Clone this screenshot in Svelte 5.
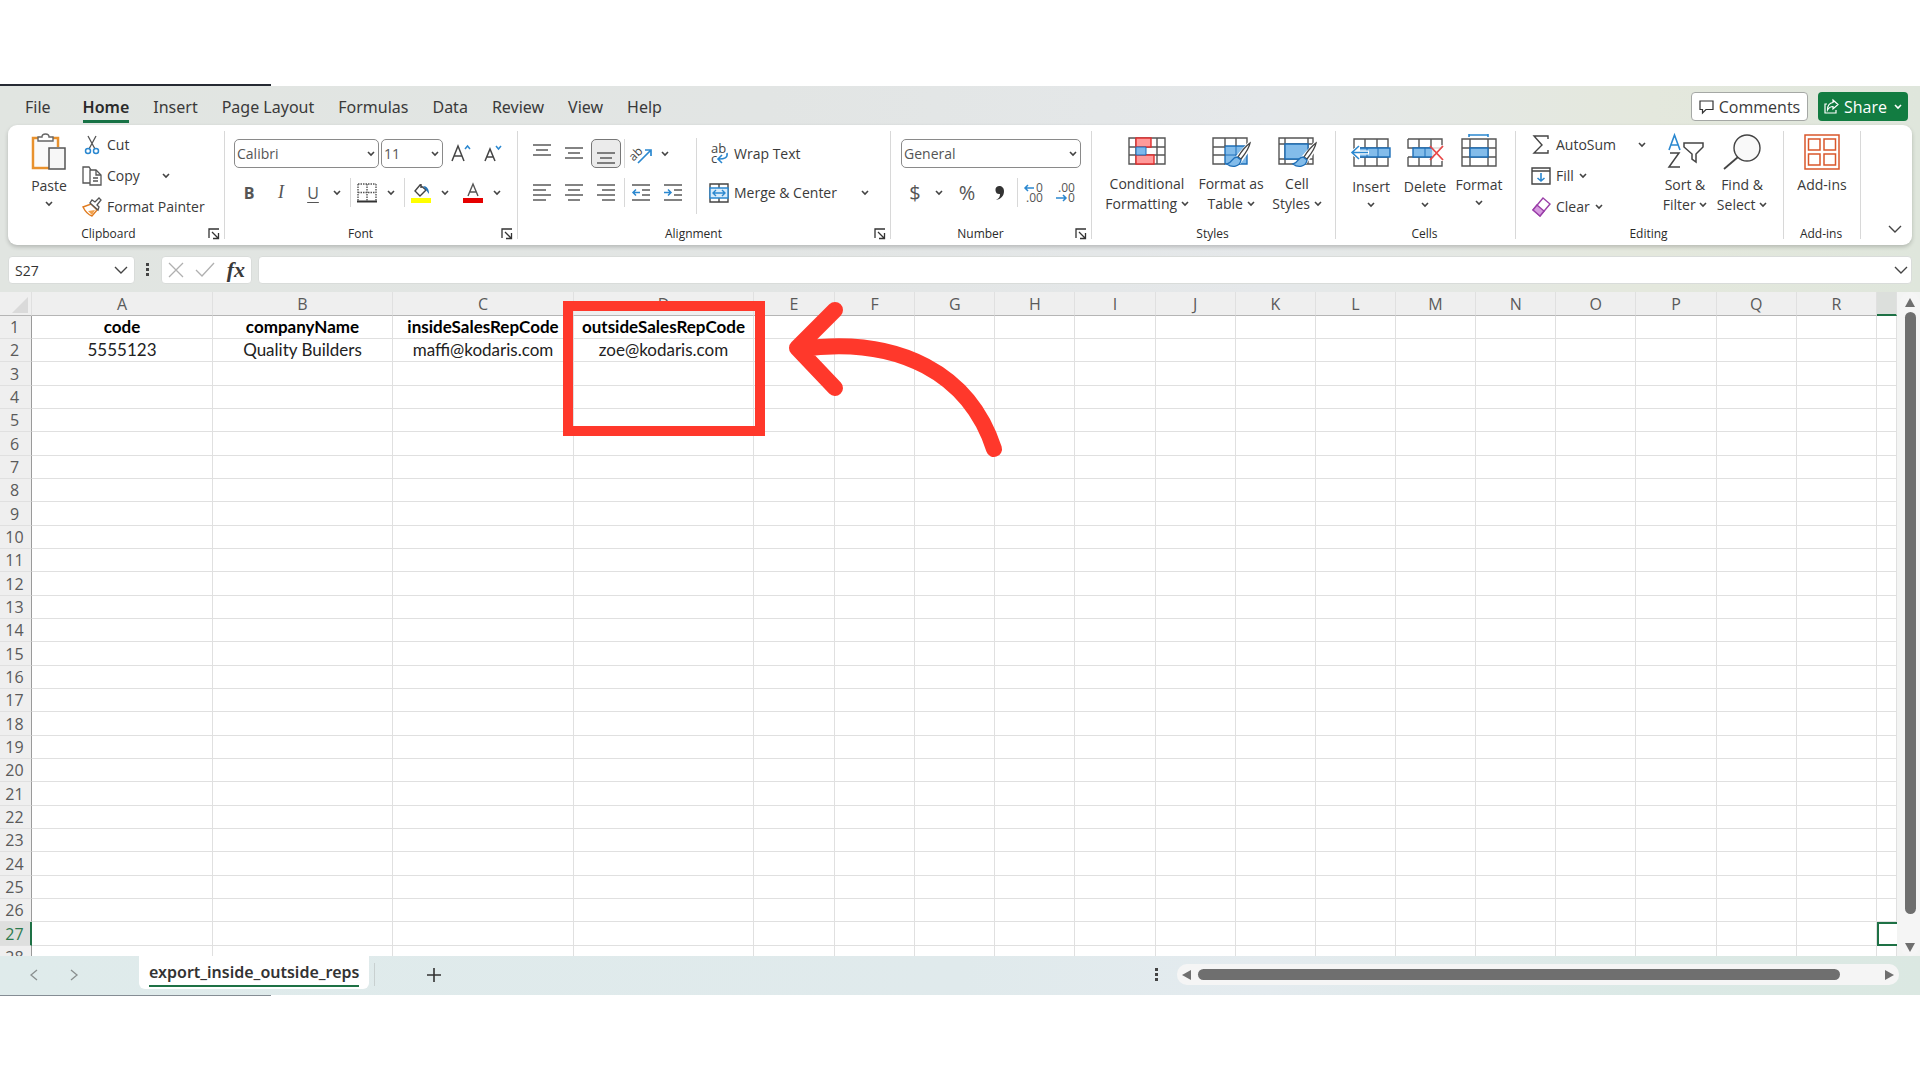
<script>
  const menus = ['File', 'Home', 'Insert', 'Page Layout', 'Formulas', 'Data', 'Review', 'View', 'Help'];
  const columns = 'ABCDEFGHIJKLMNOPQRS'.split('');
  const colClass = { A: 'c-wider', B: 'c-wide', C: 'c-wider', D: 'c-wide', E: 'c-mid', S: 'c-last' };
  const rowNumbers = Array.from({ length: 28 }, (_, i) => i + 1);
  const cells = {
    A1: 'code',
    B1: 'companyName',
    C1: 'insideSalesRepCode',
    D1: 'outsideSalesRepCode',
    A2: '5555123',
    B2: 'Quality Builders',
    C2: 'maffi@kodaris.com',
    D2: 'zoe@kodaris.com',
  };

  let activeMenu = $state('Home');
  let activeCol = $state('S');
  let activeRow = $state(27);
  let fontName = $state('Calibri');
  let fontSize = $state('11');
  let numberFormat = $state('General');
  let formula = $state('');
  let address = $derived(activeCol + activeRow);

  function pick(col, row) {
    activeCol = col;
    activeRow = row;
    formula = cells[col + row] ?? '';
  }
</script>

{#snippet chevron()}
  <svg class="chev" width="8" height="6" viewBox="0 0 8 6"><path d="M1 1l3 3 3-3" /></svg>
{/snippet}

{#snippet bigChevron()}
  <svg class="chev thin" width="14" height="9" viewBox="0 0 14 9"><path d="M1 1l6 6 6-6" /></svg>
{/snippet}

{#snippet lines(list)}
  <svg width="20" height="20" viewBox="0 0 20 20" stroke="#5a5a5a" stroke-width="1.5">
    {#each list as [x1, x2, y]}<path d="M{x1} {y}H{x2}" />{/each}
  </svg>
{/snippet}

{#snippet more(label)}
  <button class="arrow" aria-label={label}>{@render chevron()}</button>
{/snippet}

{#snippet foot(label, launcher)}
  <div class="foot" class:launcher>
    <span>{label}</span>
    {#if launcher}
      <button class="launch" aria-label="{label} settings">
        <svg width="12" height="12" viewBox="0 0 12 12" fill="none" stroke="#333" stroke-width="1.3"><path d="M1 10V1h10M4 4l6 6M10.500 5v5.500H5" /></svg>
      </button>
    {/if}
  </div>
{/snippet}

{#snippet brush()}
  <path d="M39 9L26 24l3 3L39 13z" fill="#fff" stroke="#fff" stroke-width="4" />
  <path d="M39 9c-4 3-9 9-12 14l3 2c4-5 8-10 9-16z" fill="#fff" stroke="#444" stroke-width="1.4" />
  <path d="M26 23c-5 0-5 6-10 7 5 4 13 3 14-4z" fill="#83bcea" stroke="#1e6fb8" stroke-width="1.4" />
{/snippet}

<div class="page">
  <div class="edge"></div>
  <div class="excel">
    <nav class="menu">
      {#each menus as m}
        <button class="tab" class:on={activeMenu === m} onclick={() => (activeMenu = m)}><span>{m}</span></button>
      {/each}
      <div class="actions">
        <button class="comments">
          <svg width="15" height="14" viewBox="0 0 15 14" fill="none" stroke="#333" stroke-width="1.2"><path d="M1 1h13v8.500H7L3.500 13V9.500H1z" /></svg>
          Comments
        </button>
        <button class="share">
          <svg width="15" height="15" viewBox="0 0 15 15" fill="none" stroke="#fff" stroke-width="1.2"><path d="M3 5H1v9h11v-3M9 1l5 4.500L9 10V7.500C6 7.500 5 8.500 3.500 11 3.500 7 5 4 9 3.500z" /></svg>
          Share
          {@render chevron()}
        </button>
      </div>
    </nav>

    <div class="ribbon">
      <!-- Clipboard -->
      <section class="group clipboard">
        <div class="body">
          <button class="big paste">
            <svg width="36" height="38" viewBox="0 0 36 38" fill="none">
              <path d="M9 5H2v30h16M21 5h6v9" stroke="#e8912d" stroke-width="2.500" />
              <path d="M4 7h21v7h-7v19H4z" fill="#fafafa" />
              <path d="M7 8V4h4c0-4 7-4 7 0h4v4z" fill="#fff" stroke="#666" stroke-width="1.400" />
              <path d="M18 15h16v21H18z" fill="#f7f7f7" stroke="#555" stroke-width="1.500" />
            </svg>
            <span>Paste</span>
            {@render chevron()}
          </button>
          <div class="stack">
            <div class="line">
              <button class="cmd">
                <svg width="20" height="20" viewBox="0 0 20 20" fill="none"><path d="M6 1l7 13M14 1L7 14" stroke="#555" stroke-width="1.300" /><circle cx="6" cy="16" r="2.500" stroke="#2b88d0" stroke-width="1.500" /><circle cx="14" cy="16" r="2.500" stroke="#2b88d0" stroke-width="1.500" /></svg>
                Cut
              </button>
            </div>
            <div class="line">
              <button class="cmd wide">
                <svg width="20" height="20" viewBox="0 0 20 20" fill="none" stroke="#555" stroke-width="1.300"><path d="M8 17H1V1h6l2 3" /><path d="M8 4h6l5 5v10H8z" fill="#fff" /><path d="M14 4v5h5M11 12h5M11 15h5" /></svg>
                Copy
              </button>
              {@render more('Copy options')}
            </div>
            <div class="line">
              <button class="cmd">
                <svg width="20" height="20" viewBox="0 0 20 20" fill="none"><path d="M1 10l8-3 6 6-5 6c-3-1-7-5-9-9z" fill="#fff" stroke="#e07b1f" stroke-width="1.400" /><path d="M6 14l7-1-3 5z" fill="#f2a04a" /><path d="M8 6l8 7 1-3-2-2 4-5-2-2-4 4-3-2z" fill="#fff" stroke="#555" stroke-width="1.300" /></svg>
                Format Painter
              </button>
            </div>
          </div>
        </div>
        {@render foot('Clipboard', true)}
      </section>

      <!-- Font -->
      <section class="group font">
        <div class="body rows">
          <div class="row">
            <label class="drop name">
              <select aria-label="Font" bind:value={fontName}><option>Calibri</option><option>Arial</option></select>
              {@render chevron()}
            </label>
            <label class="drop size">
              <select aria-label="Font size" bind:value={fontSize}><option>11</option><option>12</option></select>
              {@render chevron()}
            </label>
            <button class="ib" aria-label="Increase font size">
              <svg width="20" height="20" viewBox="0 0 20 20" fill="none" stroke="#444" stroke-width="1.500"><path d="M1 17L7 2l6 15M3 12h8" /><path d="M14 5l2.500-3L19 5" stroke="#2b88d0" /></svg>
            </button>
            <button class="ib" aria-label="Decrease font size">
              <svg width="20" height="20" viewBox="0 0 20 20" fill="none" stroke="#444" stroke-width="1.500"><path d="M2 17L7 5l5 12M4 13h6" /><path d="M13 2l2.500 3L18 2" stroke="#2b88d0" /></svg>
            </button>
          </div>
          <div class="row">
            <button class="ib letter"><b>B</b></button>
            <button class="ib letter ital">I</button>
            <button class="ib letter under">U</button>
            {@render more('Underline options')}
            <i class="bar"></i>
            <button class="ib" aria-label="Borders">
              <svg width="20" height="20" viewBox="0 0 20 20" fill="none" stroke="#555"><path d="M1 1h18M1 1v17M19 1v17M10 1v17M1 9.500h18" stroke-width="1.400" stroke-dasharray="1.500 1" /><path d="M0 18.500h20" stroke="#333" stroke-width="2" /></svg>
            </button>
            {@render more('Border options')}
            <i class="bar"></i>
            <button class="ib" aria-label="Fill colour">
              <svg width="20" height="20" viewBox="0 0 20 20" fill="none"><path d="M10 1v4M9 2l6 5-6 6-5-5z" stroke="#444" stroke-width="1.400" /><path d="M12 3c4 0 6 3 6 8l-3-4z" fill="#2673b5" /><path d="M0 15h20v5H0z" fill="#ff0" /></svg>
            </button>
            {@render more('Fill colours')}
            <button class="ib spaced" aria-label="Font colour">
              <svg width="20" height="20" viewBox="0 0 20 20" fill="none"><path d="M5 13L10 1l5 12M7 9h6" stroke="#555" stroke-width="1.400" /><path d="M0 15h20v5H0z" fill="#e60000" /></svg>
            </button>
            {@render more('Font colours')}
          </div>
        </div>
        {@render foot('Font', true)}
      </section>

      <!-- Alignment -->
      <section class="group alignment">
        <div class="body">
          <div class="rows align-left">
            <div class="row">
              <button class="ib" aria-label="Top align">{@render lines([[1, 19, 1], [4, 16, 6], [1, 19, 11]])}</button>
              <button class="ib" aria-label="Middle align">{@render lines([[1, 19, 4], [4, 16, 9], [1, 19, 14]])}</button>
              <button class="ib pressed" aria-label="Bottom align">{@render lines([[1, 19, 9], [4, 16, 14], [1, 19, 19]])}</button>
              <i class="bar near"></i>
              <button class="ib" aria-label="Orientation">
                <svg width="22" height="20" viewBox="0 0 22 20" fill="none"><text x="0" y="15" font-size="12" fill="#444" transform="rotate(-45 5 12)">ab</text><path d="M8 19L20 7M15 6h6v6" stroke="#2b88d0" stroke-width="1.700" /></svg>
              </button>
              {@render more('Orientation options')}
            </div>
            <div class="row">
              <button class="ib" aria-label="Align left">{@render lines([[1, 19, 2], [1, 14, 7], [1, 19, 12], [1, 14, 17]])}</button>
              <button class="ib" aria-label="Center">{@render lines([[1, 19, 2], [4, 16, 7], [1, 19, 12], [4, 16, 17]])}</button>
              <button class="ib" aria-label="Align right">{@render lines([[1, 19, 2], [6, 19, 7], [1, 19, 12], [6, 19, 17]])}</button>
              <i class="bar near"></i>
              <button class="ib" aria-label="Decrease indent">
                <svg width="20" height="20" viewBox="0 0 20 20" fill="none" stroke="#5a5a5a" stroke-width="1.500"><path d="M1 2h18M11 7h8M11 12h8M1 17h18" /><path d="M9 9.500H2M5 6.500l-3 3 3 3" stroke="#2b88d0" /></svg>
              </button>
              <button class="ib" aria-label="Increase indent">
                <svg width="20" height="20" viewBox="0 0 20 20" fill="none" stroke="#5a5a5a" stroke-width="1.500"><path d="M1 2h18M11 7h8M11 12h8M1 17h18" /><path d="M1 9.500h7M5 6.500l3 3-3 3" stroke="#2b88d0" /></svg>
              </button>
            </div>
          </div>
          <div class="rows align-right">
            <div class="row">
              <button class="cmd">
                <svg width="20" height="20" viewBox="0 0 20 20" fill="none"><text x="2" y="9" font-size="13" fill="#444">ab</text><text x="2" y="19" font-size="13" fill="#444">c</text><path d="M18 9c1 5-3 6-8 6M13 11l-4 4 4 4" stroke="#2b88d0" stroke-width="1.600" /></svg>
                Wrap Text
              </button>
            </div>
            <div class="row">
              <button class="cmd merge">
                <svg width="20" height="20" viewBox="0 0 20 20" fill="none"><path d="M1 1h18v18H1zM10 1v4M10 15v4" stroke="#444" stroke-width="1.400" /><path d="M1 5h18v10H1z" fill="#d8ebfa" stroke="#2b88d0" stroke-width="1.400" /><path d="M4 10h12M7 7l-3 3 3 3M13 7l3 3-3 3" stroke="#2b88d0" stroke-width="1.400" /></svg>
                Merge &amp; Center
              </button>
              {@render more('Merge options')}
            </div>
          </div>
        </div>
        {@render foot('Alignment', true)}
      </section>

      <!-- Number -->
      <section class="group number">
        <div class="body rows">
          <div class="row">
            <label class="drop format">
              <select aria-label="Number format" bind:value={numberFormat}><option>General</option><option>Number</option></select>
              {@render chevron()}
            </label>
          </div>
          <div class="row">
            <button class="ib sym">$</button>
            {@render more('Currency options')}
            <button class="ib sym spaced">%</button>
            <button class="ib" aria-label="Comma style">
              <svg width="12" height="18" viewBox="0 0 12 18"><path d="M6 2a4 4 0 1 0 1 8c0 3-1 4-4 6 5-1 8-4 8-9 0-3-2-5-5-5z" fill="#333" /></svg>
            </button>
            <i class="bar near"></i>
            <button class="ib" aria-label="Increase decimal">
              <svg width="20" height="20" viewBox="0 0 20 20" fill="none"><text x="12" y="9" font-size="12" fill="#555">0</text><text x="2" y="19" font-size="12" fill="#555">.00</text><path d="M10 5H1M4 2L1 5l3 3" stroke="#2b88d0" stroke-width="1.500" /></svg>
            </button>
            <button class="ib" aria-label="Decrease decimal">
              <svg width="20" height="20" viewBox="0 0 20 20" fill="none"><text x="2" y="9" font-size="12" fill="#555">.00</text><text x="12" y="19" font-size="12" fill="#555">0</text><path d="M0 15h10M7 12l3 3-3 3" stroke="#2b88d0" stroke-width="1.500" /></svg>
            </button>
          </div>
        </div>
        {@render foot('Number', true)}
      </section>

      <!-- Styles -->
      <section class="group styles">
        <div class="body">
          <button class="big tight cond">
            <svg width="40" height="34" viewBox="0 0 40 34" fill="none">
              <path d="M2 4h36v26H2zM9 4v26M30 4v26M2 13h36M2 21h36" stroke="#555" stroke-width="1.400" />
              <path d="M9 4h15v9H9zM9 21h18v9H9z" fill="#ff9a9a" stroke="#e03030" stroke-width="1.400" />
              <path d="M9 13h10v8H9z" fill="#7db8ec" stroke="#1e6fb8" /><path d="M20 14h5v6h-5z" fill="#fff" />
            </svg>
            <span>Conditional<br />Formatting {@render chevron()}</span>
          </button>
          <button class="big tight fmt">
            <svg width="40" height="34" viewBox="0 0 40 34" fill="none">
              <path d="M14 12h22v18H14z" fill="#83bcea" stroke="#1e6fb8" stroke-width="1.400" /><path d="M25 12v18M14 21h22" stroke="#1e6fb8" />
              <path d="M14 30H2V4h34v8M2 13h12M2 21h12M14 4v8M25 4v8" stroke="#555" stroke-width="1.400" />
              {@render brush()}
            </svg>
            <span>Format as<br />Table {@render chevron()}</span>
          </button>
          <button class="big tight cell">
            <svg width="40" height="34" viewBox="0 0 40 34" fill="none">
              <path d="M2 4h34v26H2zM8 4v26M31 4v26M2 10h34M2 25h34" stroke="#555" stroke-width="1.400" />
              <path d="M8 10h23v15H8z" fill="#83bcea" stroke="#1e6fb8" stroke-width="1.400" />
              {@render brush()}
            </svg>
            <span>Cell<br />Styles {@render chevron()}</span>
          </button>
        </div>
        {@render foot('Styles', false)}
      </section>

      <!-- Cells -->
      <section class="group cellops">
        <div class="body">
          <button class="big low">
            <svg width="40" height="36" viewBox="0 0 40 36" fill="none">
              <path d="M3 5h34v27H3zM14 5v27M26 5v27M3 14h34M3 23h34" stroke="#555" stroke-width="1.400" />
              <path d="M7 14h32v9H7z" fill="#83bcea" stroke="#1e6fb8" stroke-width="1.400" />
              <path d="M16 14v9M27 14v9" stroke="#1e6fb8" />
              <path d="M9 10l-9 8.500L9 27" fill="#fff" stroke="#fff" stroke-width="2" />
              <path d="M18 18.500H4" stroke="#fff" stroke-width="4" />
              <path d="M17 18.500H1M8 12l-7 6.500L8 25" stroke="#2b88d0" stroke-width="1.600" />
            </svg>
            <span>Insert</span>
            {@render chevron()}
          </button>
          <button class="big low">
            <svg width="40" height="36" viewBox="0 0 40 36" fill="none">
              <path d="M3 5h34v9M3 5v9h34M3 23v9h34v-5M3 23h24M14 5v9M26 5v9M14 23v9M26 23v9" stroke="#555" stroke-width="1.400" />
              <path d="M8 14h20v9H8z" fill="#83bcea" stroke="#1e6fb8" stroke-width="1.400" /><path d="M20 14v9" stroke="#1e6fb8" />
              <path d="M27 11h12v16H27z" fill="#fff" opacity=".8" /><path d="M25 12l13 14M38 12L25 26" stroke="#e84848" stroke-width="1.800" />
            </svg>
            <span>Delete</span>
            {@render chevron()}
          </button>
          <button class="big">
            <svg width="40" height="36" viewBox="0 0 40 36" fill="none">
              <path d="M3 5h34v27H3zM11 5v27M29 5v27M3 14h34M3 23h34" stroke="#555" stroke-width="1.400" />
              <path d="M11 14h18v9H11z" fill="#83bcea" stroke="#1e6fb8" stroke-width="1.400" />
              <path d="M10 1h19M10 0v3M29 0v3" stroke="#2b88d0" stroke-width="1.600" />
            </svg>
            <span>Format</span>
            {@render chevron()}
          </button>
        </div>
        {@render foot('Cells', false)}
      </section>

      <!-- Editing -->
      <section class="group editing">
        <div class="body">
          <div class="stack">
            <div class="line">
              <button class="cmd autosum">
                <svg width="20" height="20" viewBox="0 0 20 20" fill="none" stroke="#444" stroke-width="1.400"><path d="M17 4V1H3l8 9-8 8h14v-3" /></svg>
                AutoSum
              </button>
              {@render more('AutoSum options')}
            </div>
            <div class="line">
              <button class="cmd">
                <svg width="20" height="20" viewBox="0 0 20 20" fill="none" stroke="#444" stroke-width="1.400"><path d="M1 2h18v16H1zM1 5h18" /><path d="M10 7v8M6.500 12l3.500 3 3.500-3" stroke="#2b88d0" stroke-width="1.600" /></svg>
                Fill {@render chevron()}
              </button>
            </div>
            <div class="line">
              <button class="cmd">
                <svg width="20" height="20" viewBox="0 0 20 20" fill="none" stroke="#9a3fa8" stroke-width="1.400"><path d="M12 1l7 6-10 12-7-6z" fill="#fff" /><path d="M6 8l7 6-4 5-7-6z" fill="#d79be0" /></svg>
                Clear {@render chevron()}
              </button>
            </div>
          </div>
          <button class="big tight sort">
            <svg width="40" height="36" viewBox="0 0 40 36" fill="none">
              <path d="M4 16L9.500 1 15 16M6 11h7" stroke="#2b88d0" stroke-width="1.600" />
              <path d="M5 19h9L4 33h11" stroke="#444" stroke-width="1.500" />
              <path d="M19 9h19v4l-7 7v8l-4-3v-5l-8-7z" stroke="#444" stroke-width="1.500" />
            </svg>
            <span>Sort &amp;<br />Filter {@render chevron()}</span>
          </button>
          <button class="big tight find">
            <svg width="40" height="36" viewBox="0 0 40 36" fill="none" stroke="#444" stroke-width="1.400"><circle cx="25" cy="14" r="13" fill="#f9f9f9" /><path d="M16 23L2 35" stroke-width="1.800" /></svg>
            <span>Find &amp;<br />Select {@render chevron()}</span>
          </button>
        </div>
        {@render foot('Editing', false)}
      </section>

      <!-- Add-ins -->
      <section class="group addins">
        <div class="body">
          <button class="big tight">
            <svg width="36" height="36" viewBox="0 0 36 36" fill="none" stroke="#d9572b" stroke-width="1.500"><path d="M1 1h34v34H1zM4.500 5h11.500v11H4.500zM20 5h11.500v11H20zM4.500 20h11.500v11H4.500zM20 20h11.500v11H20z" /></svg>
            <span>Add-ins</span>
          </button>
        </div>
        {@render foot('Add-ins', false)}
      </section>

      <button class="collapse" aria-label="Collapse ribbon">{@render bigChevron()}</button>
    </div>

    <div class="formula-row">
      <label class="namebox">
        <input aria-label="Name box" value={address} />
        {@render bigChevron()}
      </label>
      <svg class="dots" width="4" height="14" viewBox="0 0 4 14" fill="#444"><path d="M0 0h3v3H0zM0 5h3v3H0zM0 10h3v3H0z" /></svg>
      <div class="fx">
        <button aria-label="Cancel"><svg width="16" height="16" viewBox="0 0 16 16" fill="none" stroke="#b0b0b0" stroke-width="1.300"><path d="M1 1l14 14M15 1L1 15" /></svg></button>
        <button aria-label="Enter"><svg width="20" height="16" viewBox="0 0 20 16" fill="none" stroke="#b0b0b0" stroke-width="1.300"><path d="M1 8l6 6L19 1" /></svg></button>
        <button class="func">fx</button>
      </div>
      <label class="formula">
        <input aria-label="Formula bar" bind:value={formula} />
        {@render bigChevron()}
      </label>
    </div>

    <div class="sheet">
      <div class="grid">
        <table>
          <colgroup>
            <col class="c-head" />
            {#each columns as c}
              <col class={colClass[c] ?? ''} />
            {/each}
          </colgroup>
          <thead>
            <tr>
              <th class="corner" aria-label="Select all"><svg width="16" height="16" viewBox="0 0 16 16"><path d="M16 0v16H0z" fill="#dadada" /></svg></th>
              {#each columns as c}
                <th class:sel={c === activeCol}>{c === 'S' ? '' : c}</th>
              {/each}
            </tr>
          </thead>
          <tbody>
            {#each rowNumbers as r}
              <tr>
                <th class:sel={r === activeRow}>{r}</th>
                {#each columns as c}
                  <td class:head={r === 1} class:active={c === activeCol && r === activeRow} onclick={() => pick(c, r)}>{cells[c + r] ?? ''}</td>
                {/each}
              </tr>
            {/each}
          </tbody>
        </table>
        <div class="mark-box"></div>
        <svg class="mark-arrow" width="240" height="170" viewBox="0 0 240 170" fill="none" stroke="#ff382b" stroke-width="16" stroke-linecap="round" stroke-linejoin="round">
          <path d="M55 18L17 56l38 40M20 57C120 43 190 83 214 157" />
        </svg>
      </div>
      <div class="vscroll">
        <svg width="10" height="9" viewBox="0 0 10 9"><path d="M5 0l5 9H0z" fill="#6f6f6f" /></svg>
        <div class="thumb"></div>
        <svg width="10" height="9" viewBox="0 0 10 9"><path d="M0 0h10L5 9z" fill="#6f6f6f" /></svg>
      </div>
    </div>

    <div class="bottom">
      <button class="step" aria-label="Previous sheet"><svg width="8" height="12" viewBox="0 0 8 12" fill="none" stroke="#8a8f8f" stroke-width="1.300"><path d="M7 1L1 6l6 5" /></svg></button>
      <button class="step" aria-label="Next sheet"><svg width="8" height="12" viewBox="0 0 8 12" fill="none" stroke="#8a8f8f" stroke-width="1.300"><path d="M1 1l6 5-6 5" /></svg></button>
      <button class="sheet-tab"><span>export_inside_outside_reps</span></button>
      <i class="tab-bar"></i>
      <button class="add" aria-label="New sheet"><svg width="14" height="14" viewBox="0 0 14 14" stroke="#333" stroke-width="1.600"><path d="M7 0v14M0 7h14" /></svg></button>
      <svg class="dots" width="4" height="14" viewBox="0 0 4 14" fill="#444"><path d="M0 0h3v3H0zM0 5h3v3H0zM0 10h3v3H0z" /></svg>
      <div class="hscroll">
        <svg width="9" height="10" viewBox="0 0 9 10"><path d="M9 0v10L0 5z" fill="#6f6f6f" /></svg>
        <div class="thumb"></div>
        <svg width="9" height="10" viewBox="0 0 9 10"><path d="M0 0l9 5-9 5z" fill="#6f6f6f" /></svg>
      </div>
    </div>
  </div>
  <div class="edge low"></div>
</div>

<style>
  :global(body) { background: #fff; }

  .page {
    box-sizing: border-box;
    height: 100vh;
    padding: 84px 0;
    display: flex;
    flex-direction: column;
    font-family: "Open Sans", "Noto Sans", sans-serif;
    font-size: 14px;
    color: #3a3a3a;
  }
  .edge { width: 271px; height: 2px; flex: none; background: #262a33; }
  .edge.low { height: 1px; background: #858d94; }

  .excel {
    flex: 1;
    min-height: 0;
    display: flex;
    flex-direction: column;
    background: linear-gradient(90deg, #e1e5e1 0%, #e2e5e4 40%, #e5e8ea 66%, #e4e8dd 86%, #dfe6dc 100%);
  }

  button {
    font: inherit;
    color: inherit;
    border: 0;
    padding: 0;
    background: none;
    display: flex;
    align-items: center;
    justify-content: center;
    cursor: pointer;
  }
  svg { flex: none; display: block; overflow: visible; }
  .chev { fill: none; stroke: #444; stroke-width: 1.6; }
  .chev.thin { stroke-width: 1.4; }

  /* menu */
  .menu { display: flex; height: 39px; flex: none; padding: 0 12px 0 13px; }
  .tab { font-family: "Noto Sans", sans-serif; font-size: 16px; padding: 8px 12px 0; align-items: flex-start; }
  .tab span { line-height: 26px; border-bottom: 3px solid transparent; }
  .tab:first-child { margin-right: 8px; }
  .tab.on { font-weight: 600; color: #2a2a2a; }
  .tab.on span { border-color: #177245; }
  .actions { margin-left: auto; display: flex; gap: 10px; padding-top: 6px; }
  .comments, .share { height: 29px; box-sizing: border-box; font-size: 16px; border-radius: 4px; gap: 5px; }
  .comments { width: 117px; background: #fff; border: 1px solid #a5a8a5; }
  .share { width: 90px; background: #127c41; color: #fff; }
  .share .chev { margin-left: 2px; stroke: #fff; }

  /* ribbon */
  .ribbon {
    display: flex;
    flex: none;
    height: 120px;
    margin: 0 8px;
    background: #fff;
    border-radius: 9px;
    box-shadow: 0 2px 4px rgba(0, 0, 0, 0.2);
  }
  .group {
    box-sizing: border-box;
    flex: none;
    display: flex;
    flex-direction: column;
    background: linear-gradient(#d8d8d8, #d8d8d8) no-repeat right 6px / 1px 108px;
  }
  .body { display: flex; flex: 1; }
  .clipboard { width: 217px; }
  .font { width: 293px; }
  .alignment { width: 373px; }
  .number { width: 201px; }
  .styles { width: 244px; }
  .cellops { width: 180px; }
  .editing { width: 268px; }
  .addins { width: 77px; }

  .foot { display: flex; height: 23px; align-items: center; font-size: 12px; position: relative; color: #2a2a2a; }
  .foot span { flex: 1; text-align: center; padding-right: 3px; }
  .foot.launcher span { padding-right: 22px; }
  .clipboard .foot span { padding-right: 16px; }
  .launch { position: absolute; right: 5px; top: 6px; }

  .rows { display: flex; flex-direction: column; padding: 14px 0 0 8px; gap: 10px; }
  .row { display: flex; align-items: center; height: 29px; }
  .ib { width: 32px; height: 29px; }
  .arrow { width: 16px; height: 29px; }
  .spaced { margin-left: 4px; }
  .letter { font-size: 16px; color: #555; }
  .ital { font-family: "Liberation Serif", serif; font-style: italic; font-size: 18px; }
  .under { text-decoration: underline; text-underline-offset: 3px; }
  .sym { font-size: 20px; color: #555; }
  .pressed { width: 30px; margin: 0 1px; box-sizing: border-box; border: 1px solid #777; border-radius: 5px; background: #ebebeb; }
  .bar { width: 1px; height: 29px; margin-left: 5px; background: #d8d8d8; }
  .bar.near { margin-left: 2px; }

  .drop {
    box-sizing: border-box;
    height: 29px;
    display: flex;
    align-items: center;
    border: 1px solid #8a8a8a;
    border-radius: 5px;
    padding-right: 3px;
  }
  .drop select {
    flex: 1;
    min-width: 0;
    appearance: none;
    border: 0;
    outline: 0;
    background: none;
    font: inherit;
    color: #555;
    padding: 0 2px;
  }
  .drop.name { width: 145px; margin: 0 2px 0 1px; }
  .drop.size { width: 62px; margin-right: 2px; }
  .drop.format { width: 180px; margin-left: 2px; }

  .align-left {
    width: 171px;
    background: linear-gradient(#d8d8d8, #d8d8d8) no-repeat right 13px / 1px 76px;
  }
  .align-right { padding-left: 12px; }
  .merge { width: 148px; }

  .cmd { gap: 5px; justify-content: flex-start; white-space: nowrap; }
  .stack { display: flex; flex-direction: column; padding-top: 4px; }
  .line { display: flex; height: 31px; align-items: center; }
  .wide { width: 76px; }
  .clipboard .stack { padding-left: 6px; }
  .editing .stack { padding-left: 15px; width: 129px; }
  .autosum { width: 103px; }

  .big { flex-direction: column; justify-content: flex-start; width: 54px; padding-top: 9px; line-height: 20px; }
  .big > span { margin-top: 5px; text-align: center; white-space: nowrap; }
  .big > .chev { margin-top: 5px; }
  .big span .chev { display: inline-block; vertical-align: 2px; }
  .big.low > span { margin-top: 7px; }
  .paste { margin-left: 14px; padding-top: 8px; }
  .styles .body { padding-left: 9px; }
  .styles .big > span { margin-top: 6px; }
  .cond { width: 92px; }
  .fmt { width: 76px; }
  .cell { width: 56px; }
  .cellops .body { padding-left: 8px; }
  .sort { width: 50px; }
  .find { width: 64px; }
  .addins .big { width: 76px; }
  .collapse { margin: auto 10px 11px auto; }

  /* formula bar */
  .formula-row { display: flex; flex: none; align-items: center; height: 44px; padding: 3px 8px 0; }
  .namebox, .formula, .fx {
    box-sizing: border-box;
    display: flex;
    align-items: center;
    height: 28px;
    background: #fff;
    border: 1px solid #d9dcda;
    border-radius: 4px;
  }
  .namebox { width: 127px; padding: 0 6px; }
  .namebox input, .formula input { flex: 1; min-width: 0; border: 0; outline: 0; padding: 0; background: none; font: inherit; color: #333; }
  .formula-row .dots { margin: 0 11px; }
  .fx { width: 91px; margin-right: 6px; padding: 0 6px; justify-content: space-between; }
  .func { font-family: "Liberation Serif", serif; font-style: italic; font-weight: 700; font-size: 22px; line-height: 24px; }
  .formula { flex: 1; padding: 0 3px 0 8px; }

  /* grid */
  .sheet { flex: 1; min-height: 0; display: flex; background: #f3f4f3; }
  .grid { flex: 1; min-width: 0; position: relative; overflow: hidden; background: #fff; }
  table { width: 100%; table-layout: fixed; border-collapse: separate; border-spacing: 0; }
  .c-head { width: 32px; }
  .c-wide { width: 180px; }
  .c-wider { width: 181px; }
  .c-mid { width: 81px; }
  .c-last { width: 20px; }
  th, td {
    box-sizing: border-box;
    height: 23px;
    padding: 0;
    line-height: 20px;
    text-align: center;
    white-space: nowrap;
    overflow: hidden;
    border-right: 1px solid #e0e0e0;
    border-bottom: 1px solid #e0e0e0;
  }
  tbody tr:nth-child(3n) th, tbody tr:nth-child(3n) td { height: 24px; }
  td { font-family: Lato, "Open Sans", sans-serif; font-size: 17px; color: #222; }
  td.head { font-weight: 700; color: #000; }
  th { font-weight: 400; font-size: 16px; color: #5a5a5a; background: #efefef; }
  thead th { height: 24px; border-bottom-color: #b5b5b5; }
  tbody th { border-right-color: #9a9a9a; padding-right: 2px; }
  .corner svg { margin: 2px 3px 0 auto; }
  thead th.sel { background: #dcdfdc; border-bottom: 2px solid #1e7145; }
  tbody th.sel { background: #dedfde; color: #2c7a4d; border-right: 2px solid #1e7145; padding-right: 1px; }
  td.active { box-shadow: inset 2px 0 #1e7145, inset 0 2px #1e7145, inset 0 -1px #1e7145; border-bottom-color: #1e7145; border-right: 0; }

  .mark-box { position: absolute; left: 563px; top: 9px; width: 182px; height: 115px; border: 10px solid #ff382b; }
  .mark-arrow { position: absolute; left: 780px; top: 0; }

  .vscroll {
    box-sizing: border-box;
    width: 20px;
    margin-left: 3px;
    padding: 6px 0 4px;
    display: flex;
    flex-direction: column;
    align-items: center;
    gap: 5px;
    background: #f5f5f5;
    border-radius: 10px;
  }
  .vscroll .thumb { flex: 1; width: 11px; margin-bottom: 24px; border-radius: 6px; background: #6f6f6f; }

  /* bottom bar */
  .bottom {
    box-sizing: border-box;
    display: flex;
    flex: none;
    height: 39px;
    align-items: center;
    padding: 0 21px 2px 24px;
    background: linear-gradient(90deg, #dfebeb 0%, #e0eaec 50%, #e4ebef 66%, #dbe9e6 85%, #dbe8e2 100%);
  }
  .step { width: 20px; height: 20px; margin-right: 20px; }
  .sheet-tab {
    align-self: flex-start;
    height: 33px;
    margin-left: 35px;
    padding: 0 10px;
    background: #fff;
    border-radius: 0 0 6px 6px;
    font-family: "Noto Sans", sans-serif;
    font-size: 16px;
    font-weight: 600;
    color: #333;
  }
  .sheet-tab span { line-height: 26px; border-bottom: 2px solid #1e7145; }
  .tab-bar { width: 1px; height: 23px; margin-left: 5px; background: #c8d0d0; }
  .add { width: 28px; height: 28px; margin: 0 auto 0 45px; }
  .bottom .dots { margin-right: 18px; }
  .hscroll {
    box-sizing: border-box;
    width: 722px;
    height: 21px;
    padding: 0 5px;
    display: flex;
    align-items: center;
    gap: 7px;
    background: #f5f5f5;
    border-radius: 10px;
  }
  .hscroll .thumb { flex: 1; height: 11px; margin-right: 38px; border-radius: 6px; background: #6f6f6f; }
</style>
